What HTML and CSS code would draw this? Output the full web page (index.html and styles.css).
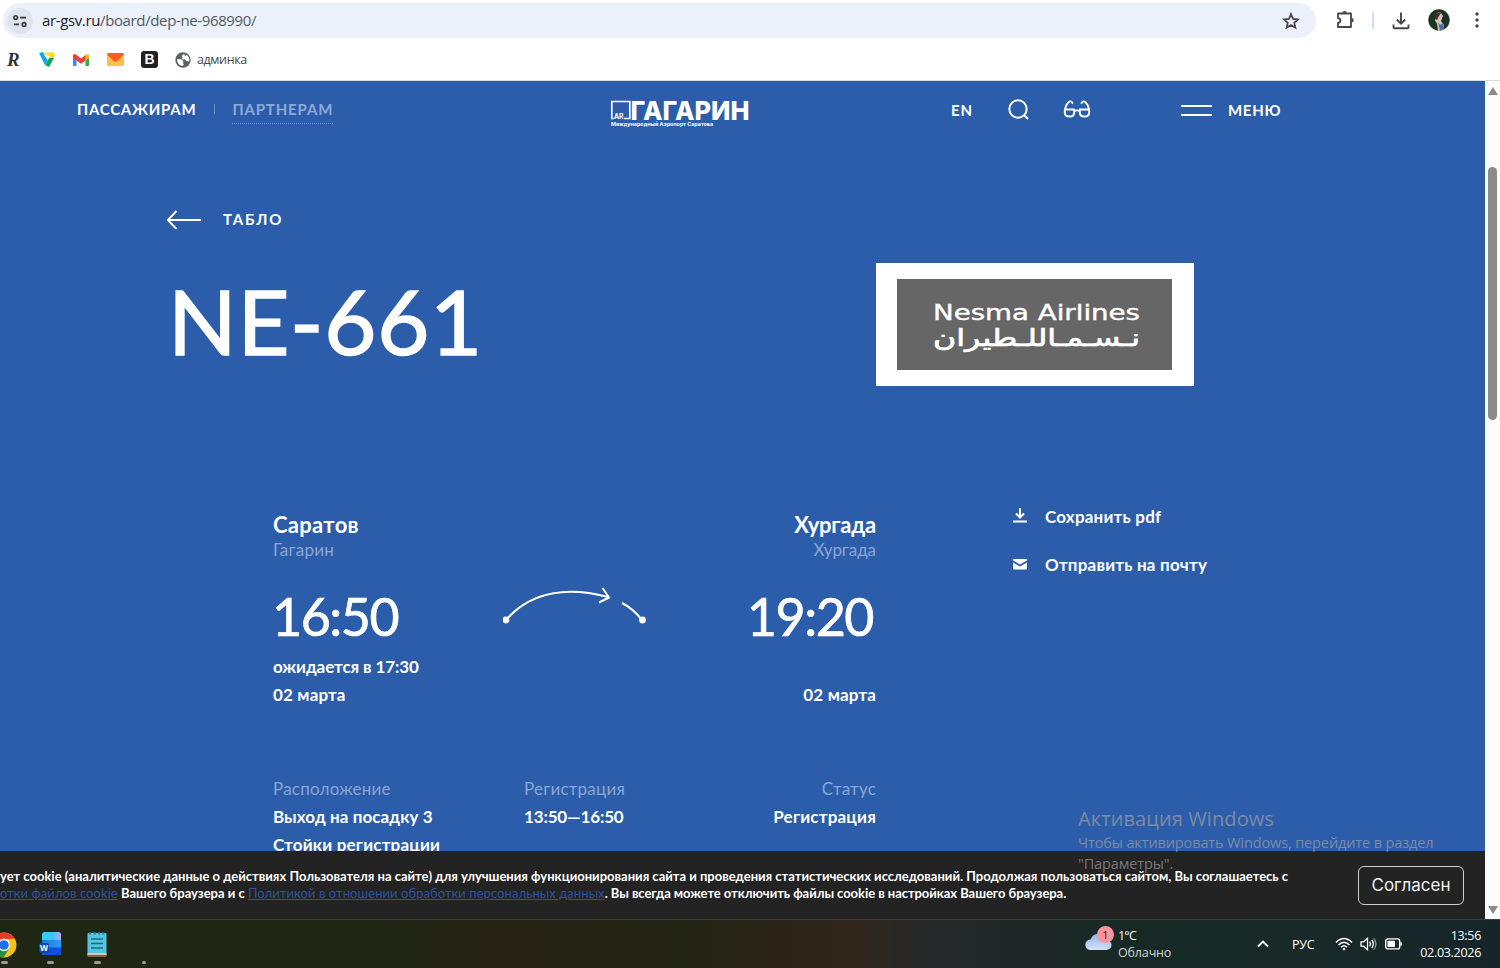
FILE: index.html
```
<!DOCTYPE html>
<html lang="ru">
<head>
    <meta charset="UTF-8">
    <meta name="viewport" content="width=device-width, initial-scale=1.0">
    <title>Рейс NE-661</title>
    <link rel="stylesheet" href="styles.css">
</head>
<body>
<div class="screen">
    <!-- browser -->
    <div class="browser">
        <div class="toolbar">
            <div class="address">
                <span class="site-info">
                    <svg width="14" height="12" viewBox="0 0 14 12" fill="none" stroke="#33373c" stroke-width="1.6"><circle cx="2.7" cy="2.6" r="1.8"/><path d="M7 2.6h6M1 9.4h5"/><circle cx="11" cy="9.4" r="1.8"/></svg>
                </span>
                <span class="url"><b>ar-gsv.ru</b>/board/dep-ne-968990/</span>
                <svg class="star" width="18" height="18" viewBox="0 0 18 18" fill="none" stroke="#474747" stroke-width="1.7"><path d="M9 2.2l2 4.7 5.1.5-3.9 3.4 1.2 5L9 13.1l-4.4 2.7 1.2-5L1.9 7.4 7 6.9z"/></svg>
            </div>
            <svg class="puzzle" width="20" height="20" viewBox="0 0 20 20"><path d="M3 3.500h13v13.500H3v-4.200a2.300 2.300 0 0 0 0-4.600z" fill="none" stroke="#474747" stroke-width="1.800" stroke-linejoin="round"/><path d="M7.300 3.200a2.200 2.200 0 0 1 4.400 0zM16.500 8a2.200 2.200 0 0 1 0 4.400z" fill="#474747"/></svg>
            <span class="divider"></span>
            <svg class="download" width="18" height="18" viewBox="0 0 18 18" fill="none" stroke="#474747" stroke-width="1.9"><path d="M9 .5v11M4.800 7.500L9 11.700 13.200 7.500M1.500 12.500v2.700q0 1 1 1h13q1 0 1-1v-2.700"/></svg>
            <svg class="avatar" width="22" height="22" viewBox="0 0 22 22"><circle cx="11" cy="11" r="10.700" fill="#1d3324"/><path d="M8 6q1-4 5-2l2 3-2 5 3 4-1 5.500-5 .3-1-7-2-3z" fill="#d9c3bd"/><path d="M7 7q1-5 6-3l-2 3-2 4-2-1z" fill="#4c2d26"/><path d="M10 13l2 3 3-2 1 6-4 1.700z" fill="#4d6ba3"/></svg>
            <svg class="dots" width="4" height="16" viewBox="0 0 4 16" fill="#474747"><circle cx="2" cy="2" r="1.700"/><circle cx="2" cy="8" r="1.700"/><circle cx="2" cy="14" r="1.700"/></svg>
        </div>
        <div class="bookmarks">
            <span class="bm-r">R</span>
            <svg width="16" height="15" viewBox="0 0 16 15"><path d="M0 1l4-1 5 9-3 4z" fill="#10a7f0"/><path d="M5 1l8-1 3 2-1 4H8z" fill="#ffdc2e"/><path d="M8 6h7l-5 9-4-2 3-4z" fill="#10a65a"/><path d="M5 3l6 1-2 4z" fill="#fff"/></svg>
            <svg width="16" height="12" viewBox="0 0 16 12"><path d="M0 1.500h3.500V12H1a1 1 0 0 1-1-1z" fill="#4285f4"/><path d="M12.500 1.500H16V11a1 1 0 0 1-1 1h-2.500z" fill="#34a853"/><path d="M12.500 1L14.500 0Q16 0 16 1.700V4l-3.500 2.500z" fill="#fbbc04"/><path d="M0 4V1.700Q0 0 1.500 0L3 .6 8 4.500 12.500 1v5.500L8 9.800 3.500 6.500z" fill="#ea4335"/></svg>
            <svg width="17" height="13" viewBox="0 0 17 13"><rect width="17" height="13" rx="1.500" fill="#ffc04d"/><path d="M0 1.500Q0 0 1.500 0h14Q17 0 17 1.500L10 8.300q-1.500 1.200-3 0z" fill="#ff5c1a"/></svg>
            <span class="bm-b">B</span>
            <svg width="16" height="16" viewBox="0 0 16 16"><circle cx="8" cy="8" r="7.700" fill="#5f6368"/><path d="M2 7l4 .3 2.500 2-.8 1.800 1.300 1-1.500 2Q2.200 13.300 2 7zM9 2L6.700 4l1 1.500L6.500 7.200l3.500.3L11.500 9l2.700.5Q15 5 11.500 2.800L10.500 4.500z" fill="#fff"/></svg>
            <span class="bm-text">админка</span>
        </div>
    </div>

    <!-- page -->
    <div class="viewport">
        <div class="site">
            <header class="header">
                <nav class="nav">
                    <a class="nav-link" href="#">ПАССАЖИРАМ</a>
                    <span class="nav-sep"></span>
                    <a class="nav-link partner" href="#">ПАРТНЕРАМ</a>
                </nav>
                <svg class="logo" width="140" height="30" viewBox="0 0 140 30" fill="#fff">
                    <path d="M.8 14V1.500h18v17h-6M.8 13v5.500h2" fill="none" stroke="#fff" stroke-width="1.700"/>
                    <text class="logo-ar" x="3" y="18.500" textLength="9.500" lengthAdjust="spacingAndGlyphs">AR</text>
                    <text class="logo-name" x="19.500" y="19.800" textLength="119" lengthAdjust="spacingAndGlyphs">ГАГАРИН</text>
                    <text class="logo-sub" x="0" y="26" textLength="102" lengthAdjust="spacingAndGlyphs">Международный Аэропорт Саратова</text>
                </svg>
                <a class="lang" href="#">EN</a>
                <svg class="search" width="22" height="22" viewBox="0 0 22 22" fill="none" stroke="#fff" stroke-width="2"><circle cx="10" cy="10" r="8.700"/><path d="M16 16l4 4"/></svg>
                <svg class="glasses" width="28" height="18" viewBox="0 0 28 18" fill="none" stroke="#fff" stroke-width="1.900" stroke-linecap="round"><path d="M1.800 9.500h9.400v2.700q0 4.300-4.700 4.300T1.800 12.200zM16.800 9.500h9.400v2.700q0 4.300-4.700 4.300t-4.700-4.300zM11.500 11q2.500-1.300 5 0M1.800 10Q2.500 5 5.500 2.200q2.500-2 4 1M26.200 10Q25.500 5 22.500 2.200q-2.500-2-4 1" stroke-linejoin="round"/></svg>
                <a class="menu" href="#"><span class="burger"></span>МЕНЮ</a>
            </header>

            <a class="back" href="#">
                <svg width="35" height="20" viewBox="0 0 35 20" fill="none" stroke="#fff" stroke-width="2"><path d="M9.500 2L.8 11l8.700 9M1 11h33"/></svg>
                ТАБЛО
            </a>

            <div class="title-row">
                <h1>NE-661</h1>
                <div class="airline">
                    <svg width="275" height="91" viewBox="0 0 275 91">
                        <rect width="275" height="91" fill="#666"/>
                        <text class="airline-name" x="36" y="41" textLength="207" lengthAdjust="spacingAndGlyphs">Nesma Airlines</text>
                        <text class="airline-ar" x="36" y="67" textLength="207" lengthAdjust="spacingAndGlyphs">نـسـمـاللـطيران</text>
                    </svg>
                </div>
            </div>

            <div class="flight">
                <div class="info">
                    <div class="route">
                        <div class="point">
                            <div class="city from">Саратов</div>
                            <div class="airport">Гагарин</div>
                            <div class="time">16:50</div>
                            <div class="expected">ожидается в 17:30</div>
                            <div class="date">02 марта</div>
                        </div>
                        <svg class="arc" width="144" height="40" viewBox="0 0 144 40" fill="none" stroke="#fff" stroke-width="2"><path d="M3 34C29 4 67 1 105 11M99.500 2l6.500 9.500-10 5M119 17q11 5.500 20 17"/><circle cx="3" cy="34" r="2.400" fill="#fff"/><circle cx="139.500" cy="34" r="2.400" fill="#fff"/></svg>
                        <div class="point right">
                            <div class="city to">Хургада</div>
                            <div class="airport to">Хургада</div>
                            <div class="time">19:20</div>
                            <div class="expected"></div>
                            <div class="date">02 марта</div>
                        </div>
                    </div>
                    <div class="details">
                        <div class="detail">
                            <div class="label">Расположение</div>
                            <div>Выход на посадку 3</div>
                            <div class="counter">Стойки регистрации</div>
                        </div>
                        <div class="detail">
                            <div class="label">Регистрация</div>
                            <div class="reg-time">13:50—16:50</div>
                        </div>
                        <div class="detail right">
                            <div class="label">Статус</div>
                            <div>Регистрация</div>
                        </div>
                    </div>
                </div>
                <div class="actions">
                    <a href="#">
                        <svg width="16" height="16" viewBox="0 0 16 16" fill="none" stroke="#fff" stroke-width="2"><path d="M8-1v9M4 4.500l4 4 4-4M1 12.500h14"/></svg>
                        Сохранить pdf
                    </a>
                    <a href="#">
                        <svg width="16" height="16" viewBox="0 0 16 16" fill="#fff"><path d="M1 3Q1 2 2 2h12q1 0 1 1v.5L8 7.500 1 3.500zM1 5.500l7 4 7-4V11.500q0 1-1 1H2q-1 0-1-1z"/></svg>
                        Отправить на почту
                    </a>
                </div>
            </div>

            <div class="cookie">
                <div class="cookie-text">
                    <p>ует cookie (аналитические данные о действиях Пользователя на сайте) для улучшения функционирования сайта и проведения статистических исследований. Продолжая пользоваться сайтом, Вы соглашаетесь с</p>
                    <p><a href="#">отки файлов cookie</a> Вашего браузера и с <a href="#">Политикой в отношении обработки персональных данных</a><span class="cookie-end">. Вы всегда можете отключить файлы cookie в настройках Вашего браузера.</span></p>
                </div>
                <button class="agree">Согласен</button>
            </div>
        </div>
        <div class="scrollbar">
            <span class="arrow-up"></span>
            <span class="thumb"></span>
            <span class="arrow-down"></span>
        </div>
    </div>

    <!-- windows taskbar -->
    <div class="taskbar">
        <div class="apps">
            <span class="app chrome">
                <svg width="26" height="26" viewBox="0 0 26 26"><circle cx="13" cy="13" r="12.500" fill="#fbc116"/><path d="M13 13L2.200 6.700A12.500 12.500 0 0 1 23.800 6.700L13 7z" fill="#e33b2e"/><path d="M2.200 6.700A12.500 12.500 0 0 0 12.500 25.500L18.500 16 13 13 8 16z" fill="#229342"/><circle cx="13" cy="13" r="6.200" fill="#fff"/><circle cx="13" cy="13" r="4.800" fill="#1a73e8"/></svg>
            </span>
            <span class="app">
                <svg width="24" height="24" viewBox="0 0 24 24">
                    <defs>
                        <linearGradient id="w1"><stop offset="0" stop-color="#2fd0fb"/><stop offset=".55" stop-color="#3fc3fa"/><stop offset="1" stop-color="#b3a8f5"/></linearGradient>
                        <linearGradient id="w2"><stop offset="0" stop-color="#1478d4"/><stop offset="1" stop-color="#2f9bff"/></linearGradient>
                    </defs>
                    <rect x="3" y="0" width="19" height="23" rx="2.500" fill="url(#w1)"/>
                    <path d="M3 8h19v10H3z" fill="url(#w2)"/>
                    <path d="M3 15.500h19v5q0 2.500-2.500 2.500h-14Q3 23 3 20.500z" fill="#0f4fe0"/>
                    <rect x="0" y="11" width="10" height="10" rx="2" fill="#0d46b5"/>
                    <text class="word-w" x="1" y="19">W</text>
                </svg>
            </span>
            <span class="app">
                <svg width="20" height="25" viewBox="0 0 20 25"><rect x=".5" y="1" width="19" height="23.500" rx="1" fill="#58c3df"/><path d="M.5 22h19v2.500H.5z" fill="#a9552a"/><path d="M.5 21.500h19v1.200H.5z" fill="#e8f3f5"/><path d="M4 7h12M4 11.500h12M4 16h12" stroke="#0c6f8e" stroke-width="1.300"/><path d="M3 0v2.500M7.500 0v2.500M12 0v2.500M16.500 0v2.500" stroke="#12829f" stroke-width="2"/></svg>
            </span>
            <span class="app small"></span>
        </div>
        <div class="weather">
            <div class="cloud">
                <svg width="28" height="20" viewBox="0 0 28 20"><defs><linearGradient id="c" x2="0" y2="1"><stop offset="0" stop-color="#8fb1ea"/><stop offset="1" stop-color="#d5e3fb"/></linearGradient></defs><path d="M5.500 18a5.200 5.200 0 0 1 0-10.400Q8 1.500 14 1.500T21.500 8a5 5 0 0 1 0 10z" fill="url(#c)"/></svg>
                <span class="badge">1</span>
            </div>
            <div class="weather-text">
                <div class="temp">1°C</div>
                <div class="sky">Облачно</div>
            </div>
        </div>
        <svg class="chevron" width="12" height="8" viewBox="0 0 12 8" fill="none" stroke="#fff" stroke-width="1.900"><path d="M1 6.500l5-5 5 5"/></svg>
        <span class="lang-ru">РУС</span>
        <svg class="wifi" width="18" height="14" viewBox="0 0 18 14" fill="none" stroke="#fff" stroke-width="1.500"><path d="M1 5.500q8-8 16 0M3.500 8q5.500-5.500 11 0M6 10.300q3-3 6 0"/><circle cx="9" cy="12" r="1.300" fill="#fff" stroke="none"/></svg>
        <svg class="sound" width="17" height="14" viewBox="0 0 17 14" fill="none" stroke="#fff" stroke-width="1.300"><path d="M1 4.800h2.500L7.500 1.500v11L3.500 9.200H1zM9.700 4.700q1.600 2.300 0 4.600M11.800 3q3 4 0 8"/><path d="M13.900 1.300q4 5.700 0 11.400" stroke="#8b9a98"/></svg>
        <svg class="battery" width="18" height="12" viewBox="0 0 18 12"><rect x=".7" y=".9" width="14" height="10" rx="2.200" fill="none" stroke="#fff" stroke-width="1.400"/><rect x="2.500" y="2.800" width="7.500" height="6.200" rx=".8" fill="#fff"/><path d="M15.300 4q2 0 2 1.900t-2 1.900z" fill="#fff"/></svg>
        <div class="clock">
            <div class="clock-time">13:56</div>
            <div class="clock-date">02.03.2026</div>
        </div>
    </div>

    <div class="watermark">
        <div class="wm-title">Активация Windows</div>
        <div class="wm-text">Чтобы активировать Windows, перейдите в раздел</div>
        <div class="wm-text">"Параметры".</div>
    </div>
</div>
</body>
</html>
```

FILE: styles.css
```
* {
    box-sizing: border-box;
    margin: 0;
    padding: 0;
}

body {
    font-family: Lato, "Open Sans", sans-serif;
    overflow: hidden;
}

a {
    color: inherit;
    text-decoration: none;
}

svg {
    display: block;
    flex: none;
}

.screen {
    position: relative;
    width: 1500px;
    height: 968px;
    display: flex;
    flex-direction: column;
    overflow: hidden;
}

/* browser */
.browser {
    height: 81px;
    flex: none;
    background: #fff;
    border-bottom: 1px solid #d9dfe6;
    font-family: "Open Sans", sans-serif;
}

.toolbar {
    display: flex;
    align-items: center;
    height: 41px;
    padding-left: 3px;
}

.address {
    display: flex;
    align-items: center;
    width: 1313px;
    height: 35px;
    border-radius: 18px;
    background: #ebf0fa;
    padding: 0 16px 0 4px;
}

.site-info {
    display: flex;
    align-items: center;
    justify-content: center;
    width: 26px;
    height: 26px;
    border-radius: 50%;
    background: #dfe4ee;
}

.url {
    margin: -1px 0 0 9px;
    font-size: 15px;
    letter-spacing: -0.37px;
    color: #555a60;
}

.url b {
    font-weight: 400;
    color: #1f2125;
}

.star {
    margin-left: auto;
}

.puzzle {
    margin: -1px 0 0 19px;
}

.divider {
    width: 2px;
    height: 17px;
    margin-left: 17px;
    background: #cfdffb;
}

.download {
    margin-left: 18px;
}

.avatar {
    margin: -2px 0 0 18px;
}

.dots {
    margin: -1px 0 0 25px;
}

.bookmarks {
    display: flex;
    align-items: center;
    height: 37px;
    padding-left: 7px;
}

.bookmarks svg {
    margin-right: 18px;
}

.bookmarks svg:last-of-type {
    margin-right: 6px;
}

.bm-r {
    width: 32px;
    font: italic bold 19px/20px "Liberation Serif", serif;
    color: #333;
}

.bm-b {
    width: 17px;
    height: 17px;
    margin: 0 17px 0 -1px;
    border-radius: 3px;
    background: #212121;
    color: #fff;
    font: bold 14px/17px "Liberation Sans", sans-serif;
    text-align: center;
}

.bm-text {
    font-size: 12.500px;
    letter-spacing: -0.4px;
    color: #474747;
}

/* page */
.viewport {
    display: flex;
    height: 838px;
    flex: none;
}

.site {
    display: flex;
    flex-direction: column;
    width: 1485px;
    background: #2c5dab;
    color: #fff;
    overflow: hidden;
}

.header {
    display: flex;
    align-items: center;
    flex: none;
    height: 60px;
    padding-left: 77px;
    font-size: 15px;
    font-weight: 700;
}

.nav {
    display: flex;
    width: 534px;
    align-items: flex-start;
    margin-top: -4px;
}

.nav-link {
    letter-spacing: 0.75px;
    line-height: 28px;
}

.nav-sep {
    width: 1px;
    height: 10px;
    margin: 9px 17px 0 18px;
    background: #6f90c6;
}

.partner {
    letter-spacing: 0.85px;
    color: #8fa9d5;
    border-bottom: 1px dotted #6f90c6;
}

.logo {
    margin-top: 8px;
    overflow: visible;
}

.logo-name {
    font: 800 26px Inter, sans-serif;
}

.logo-ar {
    font: 700 7px Inter, sans-serif;
}

.logo-sub {
    font: 700 5px Inter, sans-serif;
}

.lang {
    width: 57px;
    margin: -2px 0 0 200px;
    letter-spacing: 0.9px;
}

.search {
    margin-top: -3px;
}

.glasses {
    margin: -5px 0 0 33px;
}

.menu {
    display: flex;
    align-items: center;
    margin: -2px 0 0 90px;
    letter-spacing: 0.7px;
}

.burger {
    width: 31px;
    height: 11px;
    margin: 0 16px 0 0;
    border-top: 2px solid #fff;
    border-bottom: 2px solid #fff;
}

.back {
    display: flex;
    align-items: center;
    gap: 21px;
    margin: 68px 0 0 167px;
    font-size: 15px;
    font-weight: 700;
    line-height: 20px;
    letter-spacing: 1.8px;
}

.title-row {
    display: flex;
    width: 1194px;
    height: 123px;
    margin-top: 34px;
    padding-left: 168px;
    justify-content: space-between;
}

h1 {
    font-size: 90px;
    font-weight: 400;
    line-height: 114px;
    letter-spacing: 0.7px;
    -webkit-text-stroke: 1.500px #fff;
}

.airline {
    width: 318px;
    height: 123px;
    padding: 16px 21px;
    background: #fff;
}

.airline-name {
    font: 21px "DejaVu Sans", sans-serif;
    fill: #fff;
    stroke: #fff;
    stroke-width: 0.4px;
}

.airline-ar {
    font: 24px "DejaVu Sans", sans-serif;
    fill: #fff;
    stroke: #fff;
    stroke-width: 0.7px;
}

.flight {
    display: flex;
    margin: 126px 0 0 273px;
    height: 338px;
    flex: none;
    font-size: 17px;
    font-weight: 700;
    line-height: 28px;
}

.info {
    width: 603px;
}

.route {
    display: flex;
    justify-content: space-between;
}

.point {
    width: 230px;
}

.right {
    text-align: right;
}

.city {
    font-size: 22px;
    line-height: 26px;
}

.from {
    letter-spacing: 0.3px;
}

.airport {
    font-weight: 400;
    line-height: 24px;
    letter-spacing: 0.25px;
    color: #8ba6d3;
}

.city.to {
    letter-spacing: -0.2px;
}

.airport.to {
    letter-spacing: -0.05px;
}

.time {
    margin: 24px 0 0 -1px;
    font-size: 52px;
    font-weight: 400;
    line-height: 60px;
    letter-spacing: -1.500px;
    -webkit-text-stroke: 0.7px #fff;
}

.right .time {
    margin-right: 3px;
}

.expected {
    height: 28px;
    margin-top: 7px;
    letter-spacing: -0.1px;
}

.date {
    letter-spacing: 0.15px;
}

.arc {
    margin-top: 74px;
}

.details {
    display: flex;
    margin-top: 66px;
    letter-spacing: 0.08px;
}

.detail {
    width: 251px;
}

.detail.right {
    width: 101px;
    display: flex;
    flex-direction: column;
    align-items: flex-end;
    letter-spacing: 0.2px;
    white-space: nowrap;
}

.label {
    font-weight: 400;
    letter-spacing: 0.22px;
    color: #8ba6d3;
}

.counter {
    letter-spacing: 0.2px;
}

.reg-time {
    letter-spacing: -0.15px;
}

.actions {
    margin: -9px 0 0 136px;
    letter-spacing: 0.2px;
}

.actions svg {
    overflow: visible;
}

.actions a {
    display: flex;
    align-items: center;
    gap: 17px;
    height: 28px;
    margin-bottom: 20px;
}

.cookie {
    display: flex;
    align-items: center;
    flex: none;
    height: 68px;
    margin-top: auto;
    padding-right: 21px;
    background: #232323;
    justify-content: space-between;
    z-index: 1;
}

.cookie-text {
    font-size: 13px;
    font-weight: 700;
    line-height: 17px;
    letter-spacing: -0.005px;
    white-space: nowrap;
}

.cookie-text a {
    font-weight: 400;
    letter-spacing: 0.07px;
    color: #2c52a0;
    text-decoration: underline;
}

.cookie-end {
    letter-spacing: -0.05px;
}

.agree {
    width: 106px;
    height: 39px;
    border: 1px solid #d0d0d0;
    border-radius: 6px;
    background: transparent;
    color: #f0f0f0;
    font: 17px Inter, sans-serif;
}

.scrollbar {
    display: flex;
    flex-direction: column;
    align-items: center;
    width: 15px;
    padding: 6px 0 5px;
    background: #fcfcfc;
}

.arrow-up, .arrow-down {
    border-left: 5px solid transparent;
    border-right: 5px solid transparent;
}

.arrow-up {
    border-bottom: 8px solid #8b8b8b;
}

.arrow-down {
    margin-top: auto;
    border-top: 8px solid #8b8b8b;
}

.thumb {
    width: 9px;
    height: 253px;
    margin-top: 72px;
    border-radius: 5px;
    background: #8b8b8b;
}

/* taskbar */
.taskbar {
    display: flex;
    align-items: center;
    flex: none;
    height: 49px;
    border-top: 1px solid #3c3f3a;
    background: linear-gradient(90deg, #1f2614 0, #1f2614 380px, #272315 500px, #232515 680px, #30251a 850px, #252829 930px, #1f2827 1030px, #172a25 1130px, #192a29 1300px, #15252a 1500px);
    font: 12.500px/17px "Open Sans", sans-serif;
    color: #fff;
}

.apps {
    display: flex;
    width: 1085px;
    height: 100%;
}

.app {
    display: flex;
    flex-direction: column;
    align-items: center;
    justify-content: space-between;
    width: 46.500px;
    padding: 12px 0 4px;
}

.app:first-child {
    margin-left: -19px;
}

.app::after {
    content: "";
    width: 7px;
    height: 3px;
    border-radius: 2px;
    background: #9b9c92;
}

.app.small {
    justify-content: flex-end;
}

.app.small::after {
    width: 4px;
}

.word-w {
    font: bold 8.500px "Liberation Sans", sans-serif;
    fill: #fff;
}

.weather {
    display: flex;
    width: 172px;
}

.cloud {
    position: relative;
    width: 33px;
    padding-top: 5px;
}

.badge {
    position: absolute;
    top: -1px;
    left: 12px;
    width: 17px;
    height: 17px;
    border-radius: 50%;
    background: #ff939d;
    color: #222;
    font-size: 11px;
    text-align: center;
}

.temp {
    letter-spacing: -0.8px;
}

.sky {
    letter-spacing: -0.15px;
    color: #d0d6d4;
}

.lang-ru {
    width: 43px;
    margin-left: 23px;
    letter-spacing: -0.2px;
}

.sound {
    margin-left: 7px;
}

.battery {
    margin-left: 8px;
}

.clock {
    margin-left: auto;
    padding-right: 19px;
    text-align: right;
    letter-spacing: -0.3px;
}

/* activation notice, lies over the page */
.watermark {
    position: absolute;
    left: 1078px;
    top: 805px;
    z-index: 2;
    font-family: "Open Sans", sans-serif;
    color: rgba(160, 160, 160, 0.7);
}

.wm-title {
    font-size: 20px;
    line-height: 27px;
    letter-spacing: 0.1px;
}

.wm-text {
    font-size: 14.500px;
    line-height: 21px;
    letter-spacing: -0.12px;
    white-space: nowrap;
}
```
